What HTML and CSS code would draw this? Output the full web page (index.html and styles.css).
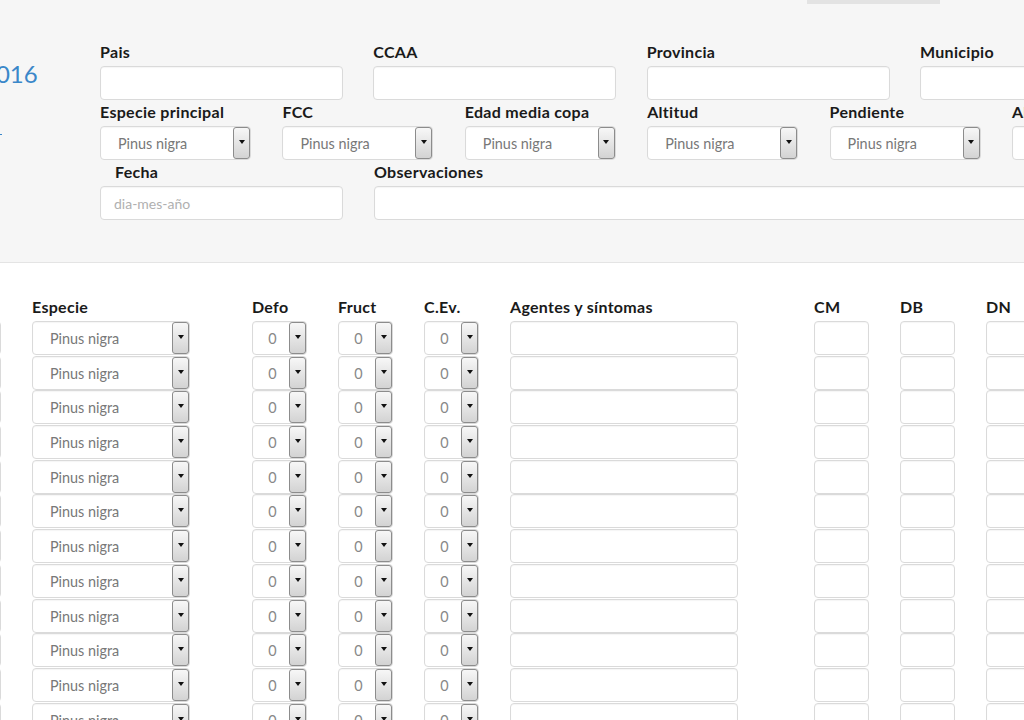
FILE: index.html
```html
<!DOCTYPE html>
<html lang="es">
<head>
<meta charset="utf-8">
<title>Parcela</title>
<link rel="stylesheet" href="styles.css">
</head>
<body>
<section class="filters">
  <div class="tab-strip"><span class="tab"></span></div>
  <div class="filters-body">
    <div class="side">
      <div class="year">2016</div>
      <div class="side-mark"></div>
    </div>
    <div class="fields">
      <div class="row row-4">
        <div class="field"><div class="label">Pais</div><input class="input" type="text"></div>
        <div class="field"><div class="label">CCAA</div><input class="input" type="text"></div>
        <div class="field"><div class="label">Provincia</div><input class="input" type="text"></div>
        <div class="field"><div class="label">Municipio</div><input class="input" type="text"></div>
      </div>
      <div class="row row-6">
        <div class="field"><div class="label">Especie principal</div><div class="select"><span class="select-value">Pinus nigra</span><span class="select-btn"><i class="arrow"></i></span></div></div>
        <div class="field"><div class="label">FCC</div><div class="select"><span class="select-value">Pinus nigra</span><span class="select-btn"><i class="arrow"></i></span></div></div>
        <div class="field"><div class="label">Edad media copa</div><div class="select"><span class="select-value">Pinus nigra</span><span class="select-btn"><i class="arrow"></i></span></div></div>
        <div class="field"><div class="label">Altitud</div><div class="select"><span class="select-value">Pinus nigra</span><span class="select-btn"><i class="arrow"></i></span></div></div>
        <div class="field"><div class="label">Pendiente</div><div class="select"><span class="select-value">Pinus nigra</span><span class="select-btn"><i class="arrow"></i></span></div></div>
        <div class="field"><div class="label">Altura</div><div class="select"><span class="select-value">Pinus nigra</span><span class="select-btn"><i class="arrow"></i></span></div></div>
      </div>
      <div class="row row-3">
        <div class="field"><div class="label label-indent">Fecha</div><input class="input input-date" type="text" placeholder="dia-mes-año"></div>
        <div class="field"><div class="label">Observaciones</div><input class="input" type="text"></div>
      </div>
    </div>
  </div>
</section>

<section class="table">
  <div class="trow thead">
    <div class="label">&nbsp;</div>
    <div class="label">Especie</div>
    <div class="label">Defo</div>
    <div class="label">Fruct</div>
    <div class="label">C.Ev.</div>
    <div class="label">Agentes y síntomas</div>
    <div class="label">CM</div>
    <div class="label">DB</div>
    <div class="label">DN</div>
  </div>

  <div class="trow">
    <input class="input" type="text">
    <div class="select select-wide"><span class="select-value">Pinus nigra</span><span class="select-btn"><i class="arrow"></i></span></div>
    <div class="select select-num"><span class="select-value">0</span><span class="select-btn"><i class="arrow"></i></span></div>
    <div class="select select-num"><span class="select-value">0</span><span class="select-btn"><i class="arrow"></i></span></div>
    <div class="select select-num"><span class="select-value">0</span><span class="select-btn"><i class="arrow"></i></span></div>
    <input class="input input-agentes" type="text">
    <input class="input" type="text"><input class="input" type="text"><input class="input" type="text">
  </div>
  <div class="trow">
    <input class="input" type="text">
    <div class="select select-wide"><span class="select-value">Pinus nigra</span><span class="select-btn"><i class="arrow"></i></span></div>
    <div class="select select-num"><span class="select-value">0</span><span class="select-btn"><i class="arrow"></i></span></div>
    <div class="select select-num"><span class="select-value">0</span><span class="select-btn"><i class="arrow"></i></span></div>
    <div class="select select-num"><span class="select-value">0</span><span class="select-btn"><i class="arrow"></i></span></div>
    <input class="input input-agentes" type="text">
    <input class="input" type="text"><input class="input" type="text"><input class="input" type="text">
  </div>
  <div class="trow">
    <input class="input" type="text">
    <div class="select select-wide"><span class="select-value">Pinus nigra</span><span class="select-btn"><i class="arrow"></i></span></div>
    <div class="select select-num"><span class="select-value">0</span><span class="select-btn"><i class="arrow"></i></span></div>
    <div class="select select-num"><span class="select-value">0</span><span class="select-btn"><i class="arrow"></i></span></div>
    <div class="select select-num"><span class="select-value">0</span><span class="select-btn"><i class="arrow"></i></span></div>
    <input class="input input-agentes" type="text">
    <input class="input" type="text"><input class="input" type="text"><input class="input" type="text">
  </div>
  <div class="trow">
    <input class="input" type="text">
    <div class="select select-wide"><span class="select-value">Pinus nigra</span><span class="select-btn"><i class="arrow"></i></span></div>
    <div class="select select-num"><span class="select-value">0</span><span class="select-btn"><i class="arrow"></i></span></div>
    <div class="select select-num"><span class="select-value">0</span><span class="select-btn"><i class="arrow"></i></span></div>
    <div class="select select-num"><span class="select-value">0</span><span class="select-btn"><i class="arrow"></i></span></div>
    <input class="input input-agentes" type="text">
    <input class="input" type="text"><input class="input" type="text"><input class="input" type="text">
  </div>
  <div class="trow">
    <input class="input" type="text">
    <div class="select select-wide"><span class="select-value">Pinus nigra</span><span class="select-btn"><i class="arrow"></i></span></div>
    <div class="select select-num"><span class="select-value">0</span><span class="select-btn"><i class="arrow"></i></span></div>
    <div class="select select-num"><span class="select-value">0</span><span class="select-btn"><i class="arrow"></i></span></div>
    <div class="select select-num"><span class="select-value">0</span><span class="select-btn"><i class="arrow"></i></span></div>
    <input class="input input-agentes" type="text">
    <input class="input" type="text"><input class="input" type="text"><input class="input" type="text">
  </div>
  <div class="trow">
    <input class="input" type="text">
    <div class="select select-wide"><span class="select-value">Pinus nigra</span><span class="select-btn"><i class="arrow"></i></span></div>
    <div class="select select-num"><span class="select-value">0</span><span class="select-btn"><i class="arrow"></i></span></div>
    <div class="select select-num"><span class="select-value">0</span><span class="select-btn"><i class="arrow"></i></span></div>
    <div class="select select-num"><span class="select-value">0</span><span class="select-btn"><i class="arrow"></i></span></div>
    <input class="input input-agentes" type="text">
    <input class="input" type="text"><input class="input" type="text"><input class="input" type="text">
  </div>
  <div class="trow">
    <input class="input" type="text">
    <div class="select select-wide"><span class="select-value">Pinus nigra</span><span class="select-btn"><i class="arrow"></i></span></div>
    <div class="select select-num"><span class="select-value">0</span><span class="select-btn"><i class="arrow"></i></span></div>
    <div class="select select-num"><span class="select-value">0</span><span class="select-btn"><i class="arrow"></i></span></div>
    <div class="select select-num"><span class="select-value">0</span><span class="select-btn"><i class="arrow"></i></span></div>
    <input class="input input-agentes" type="text">
    <input class="input" type="text"><input class="input" type="text"><input class="input" type="text">
  </div>
  <div class="trow">
    <input class="input" type="text">
    <div class="select select-wide"><span class="select-value">Pinus nigra</span><span class="select-btn"><i class="arrow"></i></span></div>
    <div class="select select-num"><span class="select-value">0</span><span class="select-btn"><i class="arrow"></i></span></div>
    <div class="select select-num"><span class="select-value">0</span><span class="select-btn"><i class="arrow"></i></span></div>
    <div class="select select-num"><span class="select-value">0</span><span class="select-btn"><i class="arrow"></i></span></div>
    <input class="input input-agentes" type="text">
    <input class="input" type="text"><input class="input" type="text"><input class="input" type="text">
  </div>
  <div class="trow">
    <input class="input" type="text">
    <div class="select select-wide"><span class="select-value">Pinus nigra</span><span class="select-btn"><i class="arrow"></i></span></div>
    <div class="select select-num"><span class="select-value">0</span><span class="select-btn"><i class="arrow"></i></span></div>
    <div class="select select-num"><span class="select-value">0</span><span class="select-btn"><i class="arrow"></i></span></div>
    <div class="select select-num"><span class="select-value">0</span><span class="select-btn"><i class="arrow"></i></span></div>
    <input class="input input-agentes" type="text">
    <input class="input" type="text"><input class="input" type="text"><input class="input" type="text">
  </div>
  <div class="trow">
    <input class="input" type="text">
    <div class="select select-wide"><span class="select-value">Pinus nigra</span><span class="select-btn"><i class="arrow"></i></span></div>
    <div class="select select-num"><span class="select-value">0</span><span class="select-btn"><i class="arrow"></i></span></div>
    <div class="select select-num"><span class="select-value">0</span><span class="select-btn"><i class="arrow"></i></span></div>
    <div class="select select-num"><span class="select-value">0</span><span class="select-btn"><i class="arrow"></i></span></div>
    <input class="input input-agentes" type="text">
    <input class="input" type="text"><input class="input" type="text"><input class="input" type="text">
  </div>
  <div class="trow">
    <input class="input" type="text">
    <div class="select select-wide"><span class="select-value">Pinus nigra</span><span class="select-btn"><i class="arrow"></i></span></div>
    <div class="select select-num"><span class="select-value">0</span><span class="select-btn"><i class="arrow"></i></span></div>
    <div class="select select-num"><span class="select-value">0</span><span class="select-btn"><i class="arrow"></i></span></div>
    <div class="select select-num"><span class="select-value">0</span><span class="select-btn"><i class="arrow"></i></span></div>
    <input class="input input-agentes" type="text">
    <input class="input" type="text"><input class="input" type="text"><input class="input" type="text">
  </div>
  <div class="trow">
    <input class="input" type="text">
    <div class="select select-wide"><span class="select-value">Pinus nigra</span><span class="select-btn"><i class="arrow"></i></span></div>
    <div class="select select-num"><span class="select-value">0</span><span class="select-btn"><i class="arrow"></i></span></div>
    <div class="select select-num"><span class="select-value">0</span><span class="select-btn"><i class="arrow"></i></span></div>
    <div class="select select-num"><span class="select-value">0</span><span class="select-btn"><i class="arrow"></i></span></div>
    <input class="input input-agentes" type="text">
    <input class="input" type="text"><input class="input" type="text"><input class="input" type="text">
  </div>
</section>
</body>
</html>
```

FILE: styles.css
```css
html, body {
  margin: 0;
  padding: 0;
  width: 1024px;
  height: 720px;
  overflow: hidden;
  background: #ffffff;
  font-family: Lato, "Open Sans", "Liberation Sans", sans-serif;
}

/* ---------- filters area ---------- */
.filters {
  height: 262px;
  background: #f6f6f6;
  border-bottom: 1px solid #e4e4e4;
}

.tab-strip {
  display: flex;
  height: 4px;
}

.tab {
  margin-left: 807px;
  width: 133px;
  background: #e3e3e3;
}

.filters-body {
  display: flex;
  padding-top: 36px;
}

.side {
  flex: none;
  width: 100px;
  padding-top: 20px;
}

.year {
  margin-left: -18px;
  font-size: 24px;
  line-height: 28px;
  color: #3a87c9;
}

.side-mark {
  width: 2px;
  height: 1px;
  margin-top: 46px;
  background: #3a87c9;
}

.fields {
  flex: none;
  display: flex;
  flex-direction: column;
}

.row {
  display: grid;
}

.row-4 {
  grid-template-columns: repeat(4, 243px);
  column-gap: 30.33px;
}

.row-6 {
  grid-template-columns: repeat(6, 151px);
  column-gap: 31.4px;
}

.row-3 {
  grid-template-columns: 243px 700px;
  column-gap: 31px;
}

.field {
  display: flex;
  flex-direction: column;
}

.label {
  font-weight: 700;
  font-size: 16px;
  letter-spacing: 0.3px;
  line-height: 22px;
  color: #1a1a1a;
  margin-top: 0.5px;
  margin-bottom: 3.5px;
  white-space: nowrap;
}

.label-indent {
  padding-left: 15px;
}

/* ---------- controls ---------- */
.input {
  display: block;
  width: 100%;
  height: 34px;
  margin: 0;
  padding: 0 13px;
  box-sizing: border-box;
  border: 1px solid #dadada;
  border-radius: 4px;
  background: #ffffff;
  box-shadow: inset 0 1px 1px rgba(0, 0, 0, 0.04);
  font-family: Lato, "Open Sans", sans-serif;
  font-size: 14px;
  color: #555;
  outline: none;
}

.input::placeholder {
  color: #b0b0b0;
}

.select {
  display: flex;
  height: 34px;
  box-sizing: border-box;
  border: 1px solid #dadada;
  border-radius: 4px;
  background: #ffffff;
  box-shadow: inset 0 1px 1px rgba(0, 0, 0, 0.04);
}

.select-value {
  flex: 1;
  padding-left: 17px;
  padding-top: 1px;
  font-size: 14.4px;
  line-height: 32px;
  color: #787878;
  white-space: nowrap;
  overflow: hidden;
}

.select-btn {
  flex: none;
  width: 17px;
  box-sizing: border-box;
  border: 1px solid #8c8c8c;
  border-radius: 3px;
  background: linear-gradient(#f7f7f7, #d3d3d3);
  display: flex;
  align-items: center;
  justify-content: center;
  padding-bottom: 2px;
}

.arrow {
  display: block;
  width: 0;
  height: 0;
  border-left: 3.5px solid transparent;
  border-right: 3.5px solid transparent;
  border-top: 4px solid #111;
}

/* ---------- table ---------- */
.table {
  padding-top: 32px;
  display: flex;
  flex-direction: column;
}

.trow {
  display: grid;
  grid-template-columns: 55px 189px 55px 55px 55px 273px 55px 55px 55px;
  column-gap: 31px;
  margin-left: -54px;
  margin-bottom: 0.7px;
}

.thead {
  margin-bottom: 0;
}

.select-wide {
  width: 158px;
}

.input-agentes {
  width: 228px;
}

.select-num .select-value {
  padding-left: 3px;
  text-align: center;
  color: #888;
}
```
